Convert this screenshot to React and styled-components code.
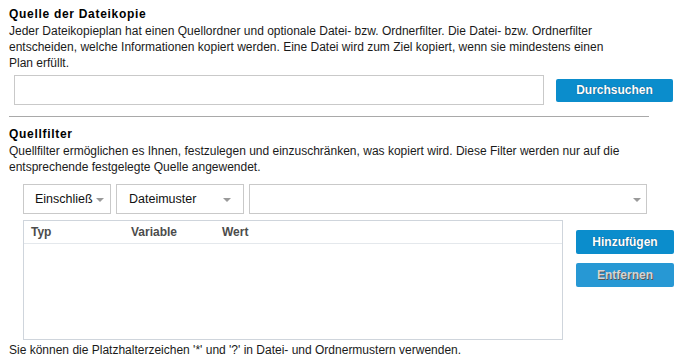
import React from "react";
import styled, { createGlobalStyle } from "styled-components";

const Global = createGlobalStyle`
  html, body { margin: 0; padding: 0; background: #fff; }
  body { font-family: "Liberation Sans", Arial, sans-serif; color: #1a1a1a; }
  * { box-sizing: border-box; }
`;

const Page = styled.div`
  width: 685px;
  height: 362px;
  padding: 6px 9px 0 9px;
  display: flex;
  flex-direction: column;
`;

const Title = styled.div`
  font-size: 12px;
  font-weight: bold;
  line-height: 16px;
  letter-spacing: 0.7px;
  color: #000;
  margin-top: ${(p) => p.$mt || 0}px;
`;

const Desc = styled.p`
  margin: 1px 0 0 0;
  font-size: 12px;
  line-height: 16px;
  color: #1a1a1a;
  white-space: nowrap;
`;

const SourceRow = styled.div`
  display: flex;
  align-items: center;
  gap: 12px;
  margin: 4px 0 0 5px;
`;

const TextInput = styled.div`
  width: 530px;
  height: 30px;
  border: 1px solid #c9c9c9;
  background: #fff;
`;

const Button = styled.button`
  width: ${(p) => p.$w}px;
  height: ${(p) => p.$h}px;
  border: none;
  border-radius: 2px;
  background: ${(p) => (p.$disabled ? "#2798d4" : "#0b8dcc")};
  color: ${(p) => (p.$disabled ? "#d4d4d4" : "#fff")};
  font-family: "Liberation Sans", Arial, sans-serif;
  font-size: 12px;
  font-weight: bold;
  text-shadow: ${(p) =>
    p.$disabled ? "1px 1px 0 #555" : "0 0 1px rgba(0,40,80,0.8)"};
  padding: 0;
  cursor: pointer;
`;

const Divider = styled.div`
  width: 640px;
  height: 1px;
  background: #a9a9a9;
  margin-top: 11px;
`;

const FilterRow = styled.div`
  display: flex;
  gap: 5px;
  margin: 9px 0 0 14px;
`;

const Select = styled.div`
  width: ${(p) => p.$w}px;
  height: 30px;
  border: 1px solid #c9c9c9;
  display: flex;
  align-items: center;
  justify-content: space-between;
  padding: 0 ${(p) => p.$pr}px 0 ${(p) => p.$pl}px;
  font-size: 12.5px;
  color: #111;
  background: #fff;
  white-space: nowrap;
`;

const Caret = styled.span`
  width: 0;
  height: 0;
  border-left: 4px solid transparent;
  border-right: 4px solid transparent;
  border-top: 4px solid #9a9a9a;
  margin-top: 1px;
`;

const TableRow = styled.div`
  display: flex;
  align-items: flex-start;
  margin: 6px 0 0 14px;
`;

const Table = styled.div`
  width: 540px;
  height: 120px;
  border: 1px solid #cfd5dc;
  background: #fff;
`;

const HeaderRow = styled.div`
  display: grid;
  grid-template-columns: 100px 91px 1fr;
  height: 23px;
  align-items: center;
  border-bottom: 1px solid #e4e8ec;
  padding-left: 7px;
  font-size: 12px;
  font-weight: bold;
  color: #4c4c4c;
`;

const ButtonCol = styled.div`
  display: flex;
  flex-direction: column;
  gap: 9px;
  margin: 10px 0 0 13px;
`;

const Note = styled.p`
  margin: 2px 0 0 0;
  font-size: 12px;
  line-height: 16px;
  color: #1a1a1a;
`;

export default function App() {
  return (
    <>
      <Global />
      <Page>
        <Title>Quelle der Dateikopie</Title>
        <Desc>
          Jeder Dateikopieplan hat einen Quellordner und optionale Datei- bzw. Ordnerfilter. Die Datei- bzw. Ordnerfilter
          <br />
          entscheiden, welche Informationen kopiert werden. Eine Datei wird zum Ziel kopiert, wenn sie mindestens einen
          <br />
          Plan erfüllt.
        </Desc>
        <SourceRow>
          <TextInput />
          <Button $w={117} $h={23}>Durchsuchen</Button>
        </SourceRow>
        <Divider />
        <Title $mt={9}>Quellfilter</Title>
        <Desc>
          Quellfilter ermöglichen es Ihnen, festzulegen und einzuschränken, was kopiert wird. Diese Filter werden nur auf die
          <br />
          entsprechende festgelegte Quelle angewendet.
        </Desc>
        <FilterRow>
          <Select $w={88} $pl={11} $pr={6}>
            Einschließ
            <Caret />
          </Select>
          <Select $w={128} $pl={12} $pr={12}>
            Dateimuster
            <Caret />
          </Select>
          <Select $w={398} $pl={12} $pr={5}>
            <span />
            <Caret />
          </Select>
        </FilterRow>
        <TableRow>
          <Table>
            <HeaderRow>
              <span>Typ</span>
              <span>Variable</span>
              <span>Wert</span>
            </HeaderRow>
          </Table>
          <ButtonCol>
            <Button $w={98} $h={24}>Hinzufügen</Button>
            <Button $w={98} $h={24} $disabled>Entfernen</Button>
          </ButtonCol>
        </TableRow>
        <Note>
          Sie können die Platzhalterzeichen '*' und '?' in Datei- und
          Ordnermustern verwenden.
        </Note>
      </Page>
    </>
  );
}
